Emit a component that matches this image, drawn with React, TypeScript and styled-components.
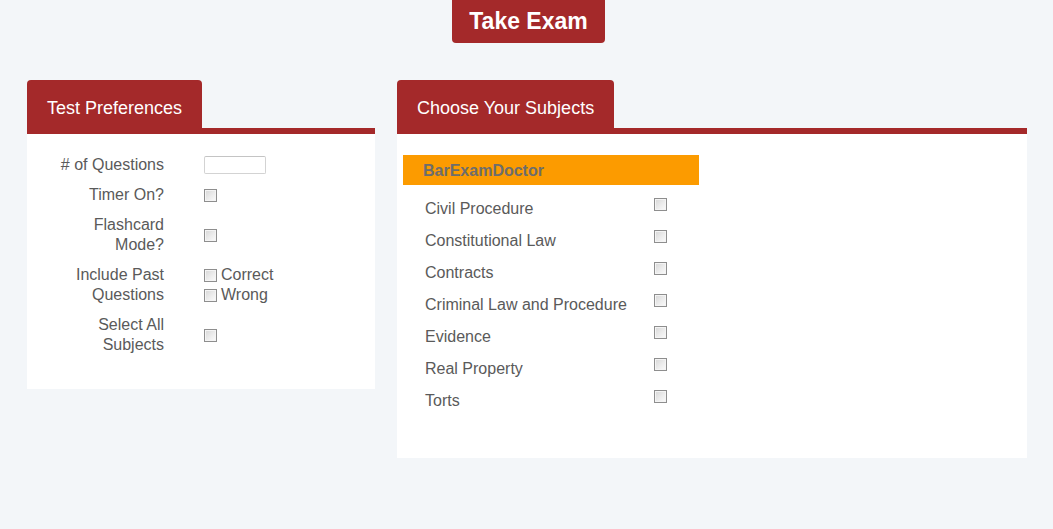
import React from 'react';
import styled, { createGlobalStyle } from 'styled-components';

const GlobalStyle = createGlobalStyle`
  html, body {
    margin: 0;
    padding: 0;
    background: #f3f6f9;
    font-family: "Liberation Sans", Arial, sans-serif;
  }
`;

const RED = '#a4292a';

const Page = styled.div`
  width: 1053px;
  height: 529px;
  box-sizing: border-box;
  padding: 0 26px 0 27px;
  background: #f3f6f9;
  overflow: hidden;
`;

const Header = styled.div`
  display: flex;
  justify-content: center;
  padding-left: 3px;
`;

const TakeExamButton = styled.button`
  height: 43px;
  padding: 0 17px;
  border: none;
  border-radius: 0 0 4px 4px;
  background: ${RED};
  color: #fff;
  font-family: inherit;
  font-size: 23px;
  font-weight: bold;
  cursor: pointer;
`;

const Panels = styled.div`
  display: flex;
  align-items: flex-start;
  gap: 22px;
  margin-top: 37px;
`;

const Panel = styled.section<{ $width: number }>`
  width: ${p => p.$width}px;
  display: flex;
  flex-direction: column;
`;

const Tab = styled.div`
  align-self: flex-start;
  height: 48px;
  box-sizing: border-box;
  padding: 4px 20px 0;
  line-height: 48px;
  border-radius: 4px 4px 0 0;
  background: ${RED};
  color: #fff;
  font-size: 18px;
  overflow: hidden;
`;

const TabBar = styled.div`
  height: 6px;
  background: ${RED};
`;

const Body = styled.div<{ $pad: string }>`
  background: #fff;
  padding: ${p => p.$pad};
`;

const PrefGrid = styled.div`
  display: grid;
  grid-template-columns: 110px auto;
  column-gap: 40px;
  row-gap: 10px;
  align-items: center;
`;

const Label = styled.div`
  text-align: right;
  font-size: 16px;
  line-height: 20px;
  color: #5a5a5a;
`;

const Field = styled.div`
  display: flex;
  flex-direction: column;
  align-items: flex-start;
`;

const NumberInput = styled.input`
  width: 62px;
  height: 18px;
  box-sizing: border-box;
  border: 1px solid #d3d3d3;
  border-top-color: #c4c4c4;
  border-radius: 2px;
  background: #fff;
  padding: 0 3px;
  outline: none;
`;

const Check = styled.input.attrs({ type: 'checkbox' })<{ $top?: number }>`
  appearance: none;
  -webkit-appearance: none;
  width: 13px;
  height: 13px;
  margin: ${p => p.$top ?? 0}px 0 0 0;
  box-sizing: border-box;
  border: 1px solid #8e8e8e;
  background: linear-gradient(135deg, #d6d6d6 0%, #ececec 55%, #fbfbfb 100%);
  box-shadow: inset 0 0 0 1px #f4f4f4;
  flex-shrink: 0;
`;

const CheckOption = styled.label`
  display: flex;
  align-items: center;
  gap: 4px;
  height: 20px;
  font-size: 16px;
  color: #5a5a5a;
`;

const VendorBar = styled.div`
  width: 296px;
  height: 30px;
  box-sizing: border-box;
  padding-left: 20px;
  line-height: 31px;
  background: #fc9b00;
  color: #6d6d6d;
  font-size: 16px;
  font-weight: bold;
`;

const SubjectList = styled.div`
  display: grid;
  grid-template-columns: 229px auto;
  padding: 7px 0 0 22px;
  align-items: start;
`;

const SubjectName = styled.div`
  padding-top: 1px;
  font-size: 16px;
  line-height: 31px;
  color: #5a5a5a;
`;

const subjects = [
  'Civil Procedure',
  'Constitutional Law',
  'Contracts',
  'Criminal Law and Procedure',
  'Evidence',
  'Real Property',
  'Torts',
];

export default function App() {
  return (
    <>
      <GlobalStyle />
      <Page>
        <Header>
          <TakeExamButton>Take Exam</TakeExamButton>
        </Header>
        <Panels>
          <Panel $width={348}>
            <Tab>Test Preferences</Tab>
            <TabBar />
            <Body $pad="21px 0 34px 27px">
              <PrefGrid>
                <Label># of Questions</Label>
                <Field>
                  <NumberInput type="text" />
                </Field>

                <Label>Timer On?</Label>
                <Field>
                  <Check />
                </Field>

                <Label>Flashcard Mode?</Label>
                <Field>
                  <Check />
                </Field>

                <Label>Include Past Questions</Label>
                <Field>
                  <CheckOption>
                    <Check /> Correct
                  </CheckOption>
                  <CheckOption>
                    <Check /> Wrong
                  </CheckOption>
                </Field>

                <Label>Select All Subjects</Label>
                <Field>
                  <Check />
                </Field>
              </PrefGrid>
            </Body>
          </Panel>

          <Panel $width={630}>
            <Tab>Choose Your Subjects</Tab>
            <TabBar />
            <Body $pad="21px 6px 42px">
              <VendorBar>BarExamDoctor</VendorBar>
              <SubjectList>
                {subjects.map(s => (
                  <React.Fragment key={s}>
                    <SubjectName>{s}</SubjectName>
                    <Check $top={6} />
                  </React.Fragment>
                ))}
              </SubjectList>
            </Body>
          </Panel>
        </Panels>
      </Page>
    </>
  );
}
